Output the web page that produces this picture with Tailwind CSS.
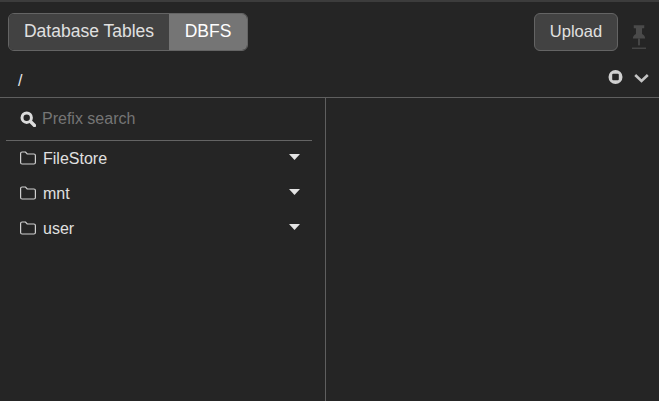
<!DOCTYPE html>
<html>
<head>
<meta charset="utf-8">
<script src="https://cdn.jsdelivr.net/npm/@tailwindcss/browser@4"></script>
</head>
<body class="m-0 overflow-hidden bg-[#252525]">
<div class="flex h-[401px] w-[659px] flex-col overflow-hidden bg-[#252525] font-['Liberation_Sans',Arial,sans-serif] text-[16px] text-[#e0e0e0]">
  <div class="h-[2px] shrink-0 bg-[#3c3c3c]"></div>
  <div class="flex h-[60px] shrink-0 items-start pl-[8px] pr-[13px] pt-[11px]">
    <div class="flex h-[38px] overflow-hidden rounded-[6px] border border-[#646464] text-[17.5px]">
      <div class="flex w-[160px] items-center justify-center bg-[#424242] pb-[2px] text-[#e0e0e0]">Database Tables</div>
      <div class="flex w-[78px] items-center justify-center bg-[#757575] pb-[2px] text-white">DBFS</div>
    </div>
    <div class="ml-auto flex items-start">
      <div class="flex h-[38px] w-[84px] items-center justify-center rounded-[6px] border border-[#646464] bg-[#424242] pb-[2px] text-[16.5px] text-[#e0e0e0]">Upload</div>
      <svg class="ml-[14px] mt-[11px] h-[27px] w-[14px]" viewBox="0 0 16 28" fill="#4a4a4a">
        <path d="M2 0h12v3.500h-2.500v6.500c2 1 3.500 2.500 3.500 5H1c0-2.500 1.500-4 3.500-5V3.500H2z"/>
        <rect x="7" y="15" width="2" height="8"/>
        <rect x="0" y="25.500" width="16" height="1.500"/>
      </svg>
    </div>
  </div>
  <div class="flex h-[36px] shrink-0 items-start justify-between border-b border-[#5f5f5f] pl-[18px] pr-[10px]">
    <span class="mt-[7px] text-[#e8e8e8]">/</span>
    <div class="mt-[8px] flex items-center gap-[11px]">
      <svg class="h-[15px] w-[15px]" viewBox="0 0 15 15"><circle cx="7.500" cy="7" r="7" fill="#d0d0d0"/><rect x="4.200" y="3.700" width="6.600" height="6.600" rx="1" fill="#252525"/></svg>
      <svg class="h-[10px] w-[15px]" viewBox="0 0 15 10" fill="none" stroke="#c4c4c4" stroke-width="2.600"><path d="M1.200 2l6.300 6 6.300-6"/></svg>
    </div>
  </div>
  <div class="flex min-h-0 flex-1">
    <div class="w-[326px] shrink-0 border-r border-[#5f5f5f]">
      <div class="ml-[6px] mr-[13px] flex h-[43px] items-center gap-[6px] border-b border-[#646464] pl-[14px]">
        <svg class="h-[16px] w-[16px]" viewBox="0 0 16 16" fill="none" stroke="#dcdcdc"><circle cx="6.700" cy="6.700" r="4.700" stroke-width="3"/><path d="M10.500 10.500l4 4" stroke-width="3.400" stroke-linecap="round"/></svg>
        <span class="text-[#757575]">Prefix search</span>
      </div>
      <div class="pl-[20px] pr-[25px]">
        <div class="flex h-[35px] items-center">
          <svg class="mr-[7px] mb-[2px] h-[14px] w-[16px]" viewBox="0 0 16 14" fill="none" stroke="#d0d0d0" stroke-width="1.200"><path d="M.6 2.500a1.500 1.500 0 0 1 1.500-1.500h3.400l1.700 2h6.700a1.500 1.500 0 0 1 1.500 1.500v7a1.500 1.500 0 0 1-1.500 1.500H2.100a1.500 1.500 0 0 1-1.500-1.500z"/></svg>
          <span>FileStore</span>
          <svg class="ml-auto mb-[4px] h-[6px] w-[11px]" viewBox="0 0 11 6" fill="#e4e4e4"><path d="M0 0h11L5.500 6z"/></svg>
        </div>
        <div class="flex h-[35px] items-center">
          <svg class="mr-[7px] mb-[2px] h-[14px] w-[16px]" viewBox="0 0 16 14" fill="none" stroke="#d0d0d0" stroke-width="1.200"><path d="M.6 2.500a1.500 1.500 0 0 1 1.500-1.500h3.400l1.700 2h6.700a1.500 1.500 0 0 1 1.500 1.500v7a1.500 1.500 0 0 1-1.500 1.500H2.100a1.500 1.500 0 0 1-1.500-1.500z"/></svg>
          <span>mnt</span>
          <svg class="ml-auto mb-[4px] h-[6px] w-[11px]" viewBox="0 0 11 6" fill="#e4e4e4"><path d="M0 0h11L5.500 6z"/></svg>
        </div>
        <div class="flex h-[35px] items-center">
          <svg class="mr-[7px] mb-[2px] h-[14px] w-[16px]" viewBox="0 0 16 14" fill="none" stroke="#d0d0d0" stroke-width="1.200"><path d="M.6 2.500a1.500 1.500 0 0 1 1.500-1.500h3.400l1.700 2h6.700a1.500 1.500 0 0 1 1.500 1.500v7a1.500 1.500 0 0 1-1.500 1.500H2.100a1.500 1.500 0 0 1-1.500-1.500z"/></svg>
          <span>user</span>
          <svg class="ml-auto mb-[4px] h-[6px] w-[11px]" viewBox="0 0 11 6" fill="#e4e4e4"><path d="M0 0h11L5.500 6z"/></svg>
        </div>
      </div>
    </div>
    <div class="flex-1"></div>
  </div>
</div>
</body>
</html>
